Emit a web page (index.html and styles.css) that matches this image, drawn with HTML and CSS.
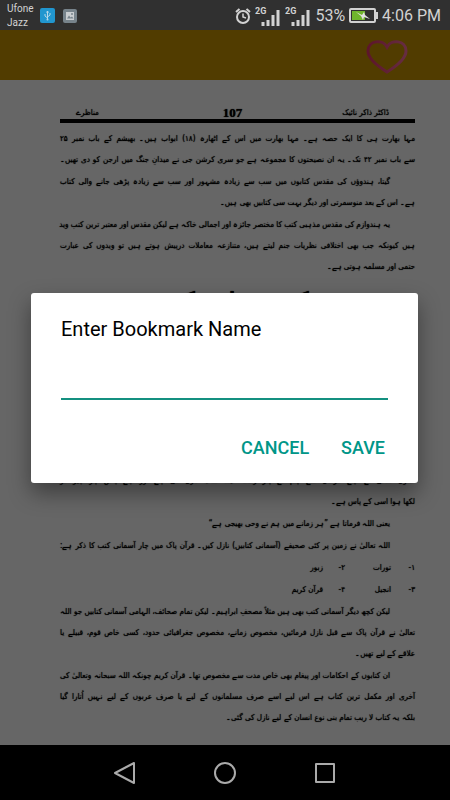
FILE: index.html
```html
<!DOCTYPE html>
<html lang="en">
<head>
    <meta charset="UTF-8">
    <meta name="viewport" content="width=device-width, initial-scale=1.0">
    <title>Enter Bookmark Name</title>
    <link rel="stylesheet" href="styles.css">
</head>
<body>
    <header class="status">
        <div class="carriers">Ufone<br>Jazz</div>
        <svg class="notice" width="15" height="15" viewBox="0 0 15 15">
            <rect width="15" height="15" rx="2" fill="#2196cf"/>
            <path d="M7.500 3v9M5 6v2l2.500 2M10 5v2L7.500 9M6.500 4.500l1-1.500 1 1.500" fill="none" stroke="#b5d8e8"/>
            <circle cx="7.500" cy="11.500" r="1" fill="#b5d8e8"/>
        </svg>
        <svg class="notice" width="14" height="14" viewBox="0 0 14 14">
            <rect width="14" height="14" rx="2" fill="#77838b"/>
            <path d="M3 3h8v8H3z" fill="#c9cdd0"/>
            <path d="M4 9.500l2-3 1.500 2L9 7.500l1.500 2z" fill="#77838b"/>
            <circle cx="9" cy="5" r="1" fill="#77838b"/>
        </svg>
        <div class="system">
            <svg width="16" height="16" viewBox="0 0 16 16" fill="none" stroke="#d2d2d2">
                <circle cx="8" cy="9" r="6" stroke-width="2"/>
                <path d="M8 5.500V9l3 1" stroke-width="1.500"/>
                <path d="M1 4l3.500-3M15 4l-3.500-3" stroke-width="2"/>
            </svg>
            <svg width="26" height="20" viewBox="0 0 26 20">
                <text class="network" x="0" y="8">2G</text>
                <path d="M8 20v-4M13 20v-6M18 20V9M23 20V4" stroke="#d2d2d2" stroke-width="3"/>
            </svg>
            <svg width="26" height="20" viewBox="0 0 26 20">
                <text class="network" x="0" y="8">2G</text>
                <path d="M8 20v-4M13 20v-6M18 20V9M23 20V4" stroke="#d2d2d2" stroke-width="3"/>
            </svg>
            <span>53%</span>
            <svg width="29" height="15" viewBox="0 0 29 15">
                <rect x="1" y="1" width="25" height="13" rx="1" fill="none" stroke="#d2d2d2" stroke-width="2"/>
                <path d="M27 4h2v7h-2z" fill="#d2d2d2"/>
                <path d="M3 3h13v9H3z" fill="#6fb52c"/>
                <path d="M7 4l6 3 2-3 1 3 5 4-6-2-1 3-2-4z" fill="#e2e2e2"/>
            </svg>
            <span>4:06 PM</span>
        </div>
    </header>

    <div class="app">
        <div class="toolbar">
            <button class="favourite" type="button" aria-label="Bookmark">
                <svg width="42" height="34" viewBox="0 0 42 34">
                    <defs>
                        <linearGradient id="heart">
                            <stop offset="0" stop-color="#e8386a"/>
                            <stop offset="1" stop-color="#ff70a4"/>
                        </linearGradient>
                    </defs>
                    <path d="M21 32C13 27 2 19 2 11 2 0 17-1 21 7 25-1 40 0 40 11 40 19 29 27 21 32z" fill="none" stroke="url(#heart)" stroke-width="3"/>
                </svg>
            </button>
        </div>

        <main class="page" lang="ur" dir="rtl">
            <div class="running-head">
                <span>ڈاکٹر ذاکر نائیک</span>
                <b class="folio">107</b>
                <span>مناظرے</span>
            </div>
            <div class="text">
                <p>
                    <span class="line">مہا بھارت ہی کا ایک حصہ ہے۔ مہا بھارت میں اس کے اٹھارہ (۱۸) ابواب ہیں۔ بھیشم کے باب نمبر ۲۵</span>
                    <span class="line">سے باب نمبر ۴۲ تک۔ یہ ان نصیحتوں کا مجموعہ ہے جو سری کرشن جی نے میدانِ جنگ میں ارجن کو دی تھیں۔</span>
                </p>
                <p>
                    <span class="line first">گیتا، ہندوؤں کی مقدس کتابوں میں سب سے زیادہ مشہور اور سب سے زیادہ پڑھی جانے والی کتاب</span>
                    <span class="line last">ہے۔ اس کے بعد منوسمرتی اور دیگر بہت سی کتابیں بھی ہیں۔</span>
                </p>
                <p>
                    <span class="line first">یہ ہندوازم کی مقدس مذہبی کتب کا مختصر جائزہ اور اجمالی خاکہ ہے لیکن مقدس اور معتبر ترین کتب وید</span>
                    <span class="line">ہیں کیونکہ جب بھی اختلافی نظریات جنم لیتے ہیں، متنازعہ معاملات درپیش ہوتے ہیں تو ویدوں کی عبارت</span>
                    <span class="line last">حتمی اور مسلمہ ہوتی ہے۔</span>
                </p>
            </div>
            <h2 class="chapter">کتب سماوی کی</h2>
            <div class="text continued">
                <p>
                    <span class="line">خدوں تعالیٰ نے اپنے فرمان سے ہم نے ہر زمانہ ایک کتاب نازل کی ہے اور اپنے پاس ہر چیز کو</span>
                    <span class="line last">لکھا ہوا اسی کے پاس ہے۔</span>
                </p>
                <p><span class="line first last">یعنی اللہ فرماتا ہے ”ہر زمانے میں ہم نے وحی بھیجی ہے“</span></p>
                <p><span class="line first">اللہ تعالیٰ نے زمین پر کئی صحیفے (آسمانی کتابیں) نازل کیں۔ قرآن پاک میں چار آسمانی کتب کا ذکر ہے:</span></p>
                <div class="books">
                    <span>۱-</span><span>تورات</span><span>۲-</span><span>زبور</span>
                    <span>۳-</span><span>انجیل</span><span>۴-</span><span>قرآن کریم</span>
                </div>
                <p>
                    <span class="line first">لیکن کچھ دیگر آسمانی کتب بھی ہیں مثلاً مصحفِ ابراہیم۔ لیکن تمام صحائف، الہامی آسمانی کتابیں جو اللہ</span>
                    <span class="line">تعالیٰ نے قرآن پاک سے قبل نازل فرمائیں، مخصوص زمانے، مخصوص جغرافیائی حدود، کسی خاص قوم، قبیلے یا</span>
                    <span class="line last">علاقے کے لیے تھیں۔</span>
                </p>
                <p>
                    <span class="line first">ان کتابوں کے احکامات اور پیغام بھی خاص مدت سے مخصوص تھا۔ قرآن کریم چونکہ اللہ سبحانہ وتعالیٰ کی</span>
                    <span class="line">آخری اور مکمل ترین کتاب ہے اس لیے اسے صرف مسلمانوں کے لیے یا صرف عربوں کے لیے نہیں اُتارا گیا</span>
                    <span class="line last">بلکہ یہ کتاب لا ریب تمام بنی نوع انسان کے لیے نازل کی گئی۔</span>
                </p>
            </div>
        </main>

        <div class="scrim">
            <form class="dialog" role="dialog" aria-labelledby="dialog-title">
                <label class="dialog-title" id="dialog-title" for="bookmark">Enter Bookmark Name</label>
                <input class="dialog-input" id="bookmark" type="text">
                <div class="dialog-actions">
                    <button type="button">CANCEL</button>
                    <button type="button">SAVE</button>
                </div>
            </form>
        </div>
    </div>

    <nav class="navbar">
        <button type="button" aria-label="Back">
            <svg width="24" height="24" viewBox="0 0 24 24"><path d="M21 2v20L2 12z"/></svg>
        </button>
        <button type="button" aria-label="Home">
            <svg width="24" height="24" viewBox="0 0 24 24"><circle cx="12" cy="12" r="10"/></svg>
        </button>
        <button type="button" aria-label="Recent apps">
            <svg width="24" height="24" viewBox="0 0 24 24"><rect x="3" y="3" width="18" height="18"/></svg>
        </button>
    </nav>
</body>
</html>
```
FILE: styles.css
```css
* {
    box-sizing: border-box;
}
body {
    margin: 0;
    min-height: 100vh;
    display: flex;
    flex-direction: column;
    background-color: #000;
    font-family: Roboto, sans-serif;
}
button {
    border: 0;
    padding: 0;
    background: none;
    font-family: inherit;
}
svg {
    display: block;
    flex-shrink: 0;
}

/* status bar */
.status {
    height: 30px;
    padding: 1px 9px 0 7px;
    display: flex;
    align-items: center;
    background-color: #303030;
    color: #d2d2d2;
}
.carriers {
    width: 33px;
    font-size: 10px;
    line-height: 14px;
}
.notice {
    margin-right: 8px;
}
.system {
    margin-left: auto;
    display: flex;
    align-items: center;
    gap: 4px;
    font-size: 16px;
    white-space: nowrap;
}
.network {
    font-size: 9px;
    font-weight: 700;
    fill: #d2d2d2;
}

/* reader */
.app {
    position: relative;
    flex: 1;
    display: flex;
    flex-direction: column;
}
.toolbar {
    height: 50px;
    padding: 3px 42px 0;
    display: flex;
    align-items: center;
    justify-content: flex-end;
    background-color: #cb9600;
}
.page {
    flex: 1;
    padding: 22px 35px 0 60px;
    background-color: #fff;
    color: #000;
    font-family: "DejaVu Sans Condensed", "DejaVu Sans", sans-serif;
    font-size: 8px;
    line-height: 21px;
    text-shadow: 0 0 1px #000;
}
.running-head {
    height: 21px;
    padding: 0 26px 0 16px;
    display: grid;
    grid-template-columns: 1fr auto 1fr;
    align-items: center;
    border-bottom: 4px solid #000;
}
.running-head span:last-child {
    text-align: left;
}
.folio {
    font-family: "Liberation Serif", serif;
    font-size: 13px;
}
.text {
    padding-top: 5px;
    display: flex;
    flex-direction: column;
    gap: 1px;
}
.chapter {
    margin: 8px 0 0;
    font-size: 20px;
    line-height: 28px;
    text-align: center;
}
.continued {
    margin-top: 152px;
}
.text p {
    margin: 0;
}
.line {
    display: block;
    height: 21px;
    white-space: nowrap;
    text-align: justify;
    text-align-last: justify;
}
.first {
    padding-right: 25px;
}
.last {
    text-align-last: start;
}
.books {
    display: grid;
    grid-template-columns: 24px 46px 22px auto;
    row-gap: 1px;
}

/* bookmark dialog */
.scrim {
    position: absolute;
    inset: 0;
    padding: 0 32px 0 31px;
    display: flex;
    align-items: center;
    background-color: rgba(0, 0, 0, 0.6);
}
.dialog {
    width: 100%;
    padding: 23px 30px 21px;
    display: flex;
    flex-direction: column;
    border-radius: 3px;
    background-color: #fff;
    box-shadow: 0 10px 22px rgba(0, 0, 0, 0.4);
}
.dialog-title {
    font-size: 20px;
    line-height: 26px;
    color: #000;
}
.dialog-input {
    width: 100%;
    height: 38px;
    margin-top: 20px;
    padding: 0;
    border: 0;
    border-bottom: 2px solid #149080;
    outline: 0;
    font-family: inherit;
    font-size: 18px;
}
.dialog-actions {
    height: 62px;
    padding: 27px 3px 0 0;
    display: flex;
    justify-content: flex-end;
    gap: 32px;
}
.dialog-actions button {
    font-size: 18px;
    font-weight: 500;
    line-height: 42px;
    height: 42px;
    color: #009688;
}

/* navigation bar */
.navbar {
    height: 55px;
    display: flex;
    align-items: center;
    justify-content: center;
    gap: 76px;
}
.navbar svg {
    fill: none;
    stroke: #aaa;
    stroke-width: 2;
    stroke-linejoin: round;
}
```
